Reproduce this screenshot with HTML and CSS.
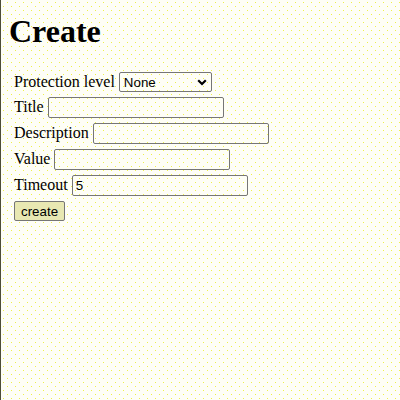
FILE: index.html
```html
<!DOCTYPE html>
<html lang="en">
<head>
<meta charset="utf-8">
<title>Create</title>
<link rel="stylesheet" href="styles.css">
</head>
<body>
<h1 class="title">Create</h1>
<form class="form">
  <div class="row">
    <label class="label" for="level">Protection level</label>
    <span class="select-wrap">
      <select class="select" id="level">
        <option>None</option>
      </select>
      <svg class="chevron" width="10" height="7" viewBox="0 0 10 7" aria-hidden="true"><polyline points="1.2,1.2 5,5 8.8,1.2" fill="none" stroke="#000" stroke-width="2.2"/></svg>
    </span>
  </div>
  <div class="row">
    <label class="label" for="title">Title</label>
    <input class="input" id="title" type="text">
  </div>
  <div class="row">
    <label class="label" for="desc">Description</label>
    <input class="input" id="desc" type="text">
  </div>
  <div class="row">
    <label class="label" for="value">Value</label>
    <input class="input" id="value" type="text">
  </div>
  <div class="row">
    <label class="label" for="timeout">Timeout</label>
    <input class="input" id="timeout" type="text" value="5">
  </div>
  <div class="row">
    <button class="button" type="button">create</button>
  </div>
</form>
</body>
</html>
```
FILE: styles.css
```css
html {
  min-height: 100%;
  border-left: 1px solid #4d4d36;
  box-sizing: border-box;
  background-color: #fefef6;
  background-image:
    conic-gradient(from 270deg at 1px 1px, #eef04a 25%, transparent 0),
    conic-gradient(from 270deg at 1px 1px, #eef04a 25%, transparent 0);
  background-size: 8px 8px, 8px 8px;
  background-position: 6px 2px, 2px 6px;
}

body {
  margin: 0;
  padding: 13px 8px 8px 8px;
  font-family: "Liberation Serif", "Times New Roman", serif;
  font-size: 16px;
  color: #000;
}

.title {
  margin: 0 0 22px 0;
  font-size: 32px;
  font-weight: bold;
  line-height: normal;
}

.form {
  margin: 0 0 0 5px;
  display: flex;
  flex-direction: column;
  gap: 5px;
}

.row {
  display: flex;
  align-items: baseline;
  gap: 4px;
}

.label {
  font-family: "Liberation Serif", "Times New Roman", serif;
  font-size: 16px;
}

.input {
  box-sizing: border-box;
  width: 176px;
  height: 21px;
  margin: 0;
  padding: 1px 3px;
  border: 1px solid #767676;
  border-radius: 2px;
  background: transparent;
  font-family: "Liberation Sans", Arial, sans-serif;
  font-size: 13.333px;
  color: #000;
}

.select-wrap {
  position: relative;
  display: inline-block;
}

.select {
  -webkit-appearance: none;
  appearance: none;
  box-sizing: border-box;
  width: 93px;
  height: 20px;
  margin: 0;
  padding: 0 18px 0 4px;
  border: 1px solid #767676;
  border-radius: 2px;
  background: transparent;
  font-family: "Liberation Sans", Arial, sans-serif;
  font-size: 13.333px;
  color: #000;
}

.chevron {
  position: absolute;
  right: 5px;
  top: 7px;
  pointer-events: none;
}

.button {
  box-sizing: border-box;
  height: 20px;
  margin: 0;
  padding: 0 6px;
  border: 1px solid #767676;
  border-radius: 2px;
  background: #e8e8b2;
  font-family: "Liberation Sans", Arial, sans-serif;
  font-size: 13.333px;
  color: #000;
}
```
